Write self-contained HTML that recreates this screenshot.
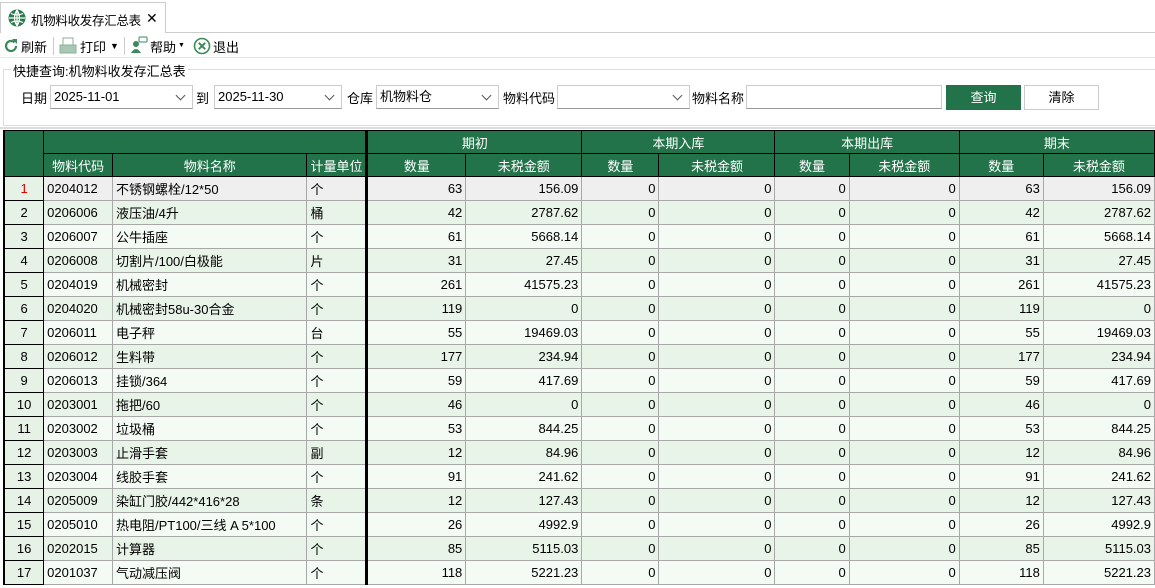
<!DOCTYPE html>
<html><head><meta charset="utf-8"><style>
*{box-sizing:border-box;margin:0;padding:0}
body{width:1155px;height:588px;overflow:hidden;background:#fff;font-family:"Liberation Sans","Noto Sans CJK SC",sans-serif;font-size:13px;color:#000;position:relative}
.abs{position:absolute}
.tab{left:0;top:2px;width:166px;height:31px;border:1px solid #ccc;border-bottom:none;background:#fff}
.tabline{left:166px;top:32px;width:989px;height:1px;background:#ccc}
.toolbar span{position:absolute;top:37px;font-size:13px}
.sel{position:absolute;top:85px;height:24px;border:1px solid #ccc;border-bottom:1px solid #999;background:#fff;font-size:13px;line-height:22px;padding-left:3px}
.sel:after{content:"";position:absolute;right:8px;top:6px;width:6px;height:6px;border-right:1px solid #555;border-bottom:1px solid #555;transform:rotate(45deg)}
.lbl{position:absolute;top:88px;font-size:13px}
table{position:absolute;left:3px;top:130px;border-collapse:collapse;table-layout:fixed;font-size:13px}
td,th{height:24px;padding:0 3px;white-space:nowrap;overflow:hidden}
th{background:#22734a;color:#fff;font-weight:normal;border:1px solid #000;height:23px}
td{border:1px solid #a8a8a8}
td.n{text-align:center;background:#e6f2e6;border:1px solid #000;border-left:2px solid #000}
td.r{text-align:right}
td.tk,th.tk{border-left:3px solid #000}
tr.o td{background:#f4faf4}
tr.e td{background:#e8f4e8}
tr.s td{background:#efefef}
tr td.n{background:#e6f2e6}
</style></head><body>
<div class="abs tab"></div>
<div class="abs tabline"></div>
<svg class="abs" style="left:8px;top:9px" width="18" height="18" viewBox="0 0 18 18"><circle cx="9" cy="9" r="8.5" fill="#2b7a4b"/><path d="M9 1v16M1 9h16M3 4.5q6 3 12 0M3 13.5q6-3 12 0M9 1q-5 8 0 16M9 1q5 8 0 16" stroke="#fff" stroke-width="1.2" fill="none"/></svg>
<span class="abs" style="left:31px;top:10px;font-size:12.5px;letter-spacing:-0.3px">机物料收发存汇总表</span>
<span class="abs" style="left:146px;top:10px;font-size:14px">✕</span>

<div class="toolbar">
<svg class="abs" style="left:3px;top:38px" width="16" height="16" viewBox="0 0 16 16"><path d="M13 8a5 5 0 1 1-1.5-3.6" stroke="#3a8a5a" stroke-width="2.2" fill="none"/><path d="M9 1l5 0 0 5z" fill="#3a8a5a"/></svg>
<span style="left:21px">刷新</span>
<div class="abs" style="left:53px;top:37px;width:1px;height:18px;background:#ccc"></div>
<svg class="abs" style="left:59px;top:37px" width="18" height="17" viewBox="0 0 18 17"><rect x="4" y="1" width="10" height="7" fill="#fff" stroke="#8ab09a"/><rect x="1" y="8" width="16" height="8" fill="#a9c8b4" stroke="#8ab09a"/></svg>
<span style="left:80px">打印</span>
<span style="left:110px;top:41px;font-size:9px">▼</span>
<div class="abs" style="left:124px;top:37px;width:1px;height:18px;background:#ccc"></div>
<svg class="abs" style="left:130px;top:36px" width="18" height="18" viewBox="0 0 18 18"><circle cx="6" cy="8" r="3" fill="#3a8a5a"/><path d="M1 17q5-8 10 0z" fill="#3a8a5a"/><rect x="9" y="1" width="8" height="5" rx="1" fill="#fff" stroke="#3a8a5a"/></svg>
<span style="left:150px">帮助</span>
<span style="left:178px;top:42px;font-size:7px">▼</span>
<svg class="abs" style="left:193px;top:37px" width="18" height="18" viewBox="0 0 18 18"><circle cx="9" cy="9" r="7.5" fill="#fff" stroke="#3a8a5a" stroke-width="1.6"/><path d="M5.8 5.8l6.4 6.4M12.2 5.8l-6.4 6.4" stroke="#3a8a5a" stroke-width="2"/></svg>
<span style="left:213px">退出</span>
</div>
<div class="abs" style="left:0;top:57px;width:1155px;height:1px;background:#e6e6e6"></div>

<div class="abs" style="left:3px;top:69px;width:1152px;height:57px;border:1px solid #ddd;border-right:none"></div>
<span class="abs" style="left:11px;top:61px;background:#fff;padding:0 2px">快捷查询:机物料收发存汇总表</span>

<span class="lbl" style="left:21px">日期</span>
<div class="sel" style="left:50px;width:143px">2025-11-01</div>
<span class="lbl" style="left:196px">到</span>
<div class="sel" style="left:214px;width:128px">2025-11-30</div>
<span class="lbl" style="left:347px">仓库</span>
<div class="sel" style="left:376px;width:123px">机物料仓</div>
<span class="lbl" style="left:503px">物料代码</span>
<div class="sel" style="left:557px;width:133px"></div>
<span class="lbl" style="left:692px">物料名称</span>
<div class="abs" style="left:746px;top:85px;width:196px;height:24px;border:1px solid #ccc;border-bottom:1px solid #999"></div>
<div class="abs" style="left:946px;top:85px;width:75px;height:25px;background:#22734a;color:#fff;text-align:center;line-height:25px">查询</div>
<div class="abs" style="left:1024px;top:85px;width:75px;height:25px;border:1px solid #ccc;text-align:center;line-height:23px">清除</div>
<div class="abs" style="left:0;top:127px;width:1155px;height:2px;background:#ddd"></div>

<table>
<colgroup><col style="width:40px"><col style="width:69px"><col style="width:195px"><col style="width:49px"><col style="width:100px"><col style="width:117px"><col style="width:78px"><col style="width:117px"><col style="width:75px"><col style="width:111px"><col style="width:85px"><col style="width:112px"></colgroup>
<tr><th rowspan="2" style="border-left:2px solid #000"></th><th colspan="3"></th><th colspan="2" class="tk">期初</th><th colspan="2">本期入库</th><th colspan="2">本期出库</th><th colspan="2">期末</th></tr>
<tr><th>物料代码</th><th>物料名称</th><th>计量单位</th><th class="tk">数量</th><th>未税金额</th><th>数量</th><th>未税金额</th><th>数量</th><th>未税金额</th><th>数量</th><th>未税金额</th></tr>
<tr class="s"><td class="n" style="color:#e00000">1</td><td>0204012</td><td>不锈钢螺栓/12*50</td><td>个</td><td class="r tk">63</td><td class="r">156.09</td><td class="r">0</td><td class="r">0</td><td class="r">0</td><td class="r">0</td><td class="r">63</td><td class="r">156.09</td></tr>
<tr class="e"><td class="n">2</td><td>0206006</td><td>液压油/4升</td><td>桶</td><td class="r tk">42</td><td class="r">2787.62</td><td class="r">0</td><td class="r">0</td><td class="r">0</td><td class="r">0</td><td class="r">42</td><td class="r">2787.62</td></tr>
<tr class="o"><td class="n">3</td><td>0206007</td><td>公牛插座</td><td>个</td><td class="r tk">61</td><td class="r">5668.14</td><td class="r">0</td><td class="r">0</td><td class="r">0</td><td class="r">0</td><td class="r">61</td><td class="r">5668.14</td></tr>
<tr class="e"><td class="n">4</td><td>0206008</td><td>切割片/100/白极能</td><td>片</td><td class="r tk">31</td><td class="r">27.45</td><td class="r">0</td><td class="r">0</td><td class="r">0</td><td class="r">0</td><td class="r">31</td><td class="r">27.45</td></tr>
<tr class="o"><td class="n">5</td><td>0204019</td><td>机械密封</td><td>个</td><td class="r tk">261</td><td class="r">41575.23</td><td class="r">0</td><td class="r">0</td><td class="r">0</td><td class="r">0</td><td class="r">261</td><td class="r">41575.23</td></tr>
<tr class="e"><td class="n">6</td><td>0204020</td><td>机械密封58u-30合金</td><td>个</td><td class="r tk">119</td><td class="r">0</td><td class="r">0</td><td class="r">0</td><td class="r">0</td><td class="r">0</td><td class="r">119</td><td class="r">0</td></tr>
<tr class="o"><td class="n">7</td><td>0206011</td><td>电子秤</td><td>台</td><td class="r tk">55</td><td class="r">19469.03</td><td class="r">0</td><td class="r">0</td><td class="r">0</td><td class="r">0</td><td class="r">55</td><td class="r">19469.03</td></tr>
<tr class="e"><td class="n">8</td><td>0206012</td><td>生料带</td><td>个</td><td class="r tk">177</td><td class="r">234.94</td><td class="r">0</td><td class="r">0</td><td class="r">0</td><td class="r">0</td><td class="r">177</td><td class="r">234.94</td></tr>
<tr class="o"><td class="n">9</td><td>0206013</td><td>挂锁/364</td><td>个</td><td class="r tk">59</td><td class="r">417.69</td><td class="r">0</td><td class="r">0</td><td class="r">0</td><td class="r">0</td><td class="r">59</td><td class="r">417.69</td></tr>
<tr class="e"><td class="n">10</td><td>0203001</td><td>拖把/60</td><td>个</td><td class="r tk">46</td><td class="r">0</td><td class="r">0</td><td class="r">0</td><td class="r">0</td><td class="r">0</td><td class="r">46</td><td class="r">0</td></tr>
<tr class="o"><td class="n">11</td><td>0203002</td><td>垃圾桶</td><td>个</td><td class="r tk">53</td><td class="r">844.25</td><td class="r">0</td><td class="r">0</td><td class="r">0</td><td class="r">0</td><td class="r">53</td><td class="r">844.25</td></tr>
<tr class="e"><td class="n">12</td><td>0203003</td><td>止滑手套</td><td>副</td><td class="r tk">12</td><td class="r">84.96</td><td class="r">0</td><td class="r">0</td><td class="r">0</td><td class="r">0</td><td class="r">12</td><td class="r">84.96</td></tr>
<tr class="o"><td class="n">13</td><td>0203004</td><td>线胶手套</td><td>个</td><td class="r tk">91</td><td class="r">241.62</td><td class="r">0</td><td class="r">0</td><td class="r">0</td><td class="r">0</td><td class="r">91</td><td class="r">241.62</td></tr>
<tr class="e"><td class="n">14</td><td>0205009</td><td>染缸门胶/442*416*28</td><td>条</td><td class="r tk">12</td><td class="r">127.43</td><td class="r">0</td><td class="r">0</td><td class="r">0</td><td class="r">0</td><td class="r">12</td><td class="r">127.43</td></tr>
<tr class="o"><td class="n">15</td><td>0205010</td><td>热电阻/PT100/三线 A 5*100</td><td>个</td><td class="r tk">26</td><td class="r">4992.9</td><td class="r">0</td><td class="r">0</td><td class="r">0</td><td class="r">0</td><td class="r">26</td><td class="r">4992.9</td></tr>
<tr class="e"><td class="n">16</td><td>0202015</td><td>计算器</td><td>个</td><td class="r tk">85</td><td class="r">5115.03</td><td class="r">0</td><td class="r">0</td><td class="r">0</td><td class="r">0</td><td class="r">85</td><td class="r">5115.03</td></tr>
<tr class="o"><td class="n">17</td><td>0201037</td><td>气动减压阀</td><td>个</td><td class="r tk">118</td><td class="r">5221.23</td><td class="r">0</td><td class="r">0</td><td class="r">0</td><td class="r">0</td><td class="r">118</td><td class="r">5221.23</td></tr>
</table>
</body></html>
